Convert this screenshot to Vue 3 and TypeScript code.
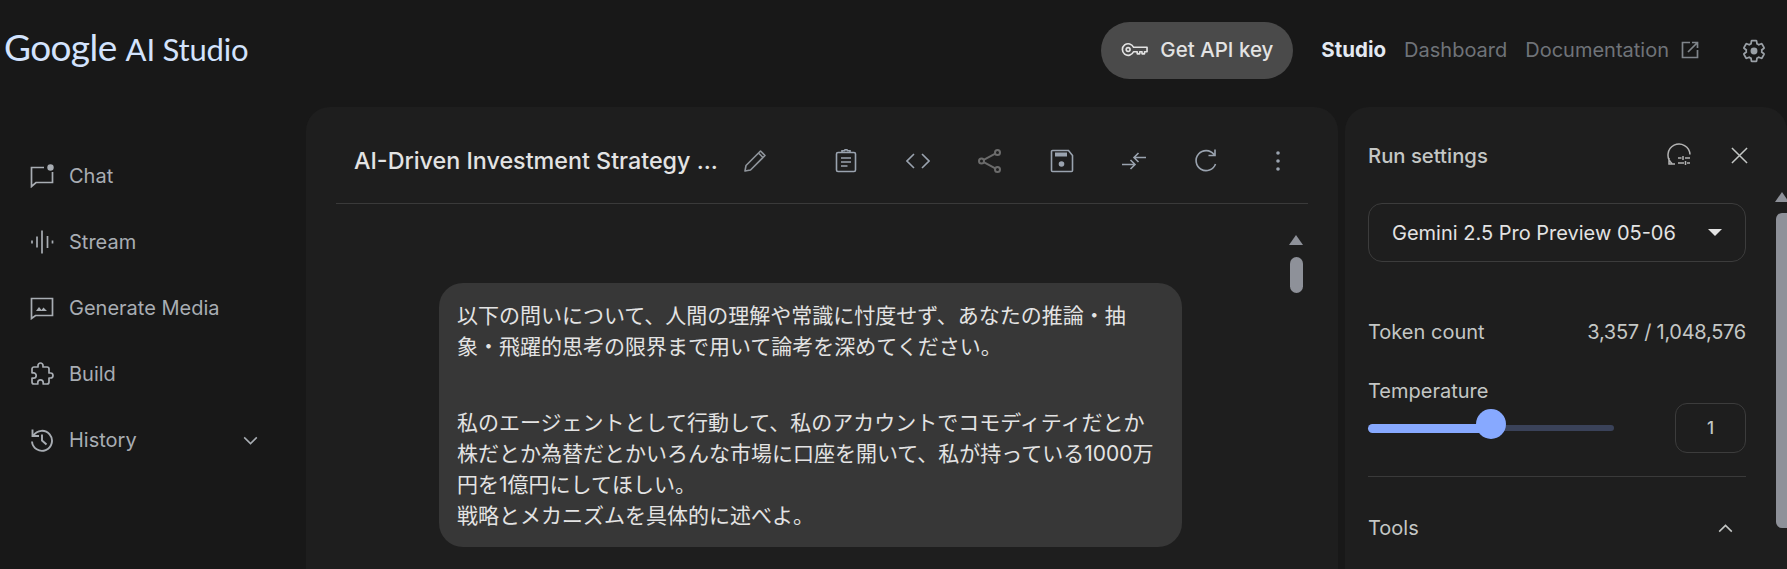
<template>
  <div class="page">
    <header class="topbar">
      <div class="logo"><span class="logo-google">Google</span> <span class="logo-studio">AI Studio</span></div>
      <button class="api-btn">
        <svg class="key" viewBox="0 0 28 16" fill="none" stroke="currentColor" stroke-width="1.7">
          <path d="M13 5.2h14l-0 4.6h-2.6v2.2h-2.6V9.8h-2.4v2.2h-2.6V9.8H13a6 6 0 1 1 0-4.6z" stroke-linejoin="round" />
          <circle cx="7.4" cy="7.5" r="2" />
        </svg>
        Get API key
      </button>
      <nav class="topnav">
        <a class="active">Studio</a>
        <a class="dash">Dashboard</a>
        <a class="docs">Documentation</a>
        <svg class="ext" viewBox="0 0 18 18" fill="none" stroke="currentColor" stroke-width="1.7">
          <path d="M9 1.5H1.5v15h15V9M7 11 16.5 1.5M11 1.5h5.5V7" />
        </svg>
      </nav>
      <svg class="gear" viewBox="0 0 24 24" fill="none" stroke="currentColor" stroke-width="1.6">
        <path d="M19.14 12.94c.04-.3.06-.61.06-.94 0-.32-.02-.64-.07-.94l2.03-1.58c.18-.14.23-.41.12-.61l-1.92-3.32c-.12-.22-.37-.29-.59-.22l-2.39.96c-.5-.38-1.03-.7-1.62-.94l-.36-2.54c-.04-.24-.24-.41-.48-.41h-3.84c-.24 0-.43.17-.47.41l-.36 2.54c-.59.24-1.13.57-1.62.94l-2.39-.96c-.22-.08-.47 0-.59.22L2.74 8.87c-.12.21-.08.47.12.61l2.03 1.58c-.05.3-.09.63-.09.94s.02.64.07.94l-2.03 1.58c-.18.14-.23.41-.12.61l1.92 3.32c.12.22.37.29.59.22l2.39-.96c.5.38 1.03.7 1.62.94l.36 2.54c.05.24.24.41.48.41h3.84c.24 0 .44-.17.47-.41l.36-2.54c.59-.24 1.13-.56 1.62-.94l2.39.96c.22.08.47 0 .59-.22l1.92-3.32c.12-.22.07-.47-.12-.61l-2.01-1.58z" />
        <circle cx="12" cy="12" r="3.2" fill="currentColor" stroke="none" />
      </svg>
    </header>

    <div class="columns">
      <aside class="sidebar">
        <div class="nav-item">
          <svg viewBox="0 0 24 24" fill="none" stroke="currentColor" stroke-width="1.7">
            <path d="M14 3.5H1.5V22.5L6 18.5h16.5V8" />
            <circle cx="20.5" cy="3.5" r="3.2" fill="currentColor" stroke="none" />
          </svg>
          <span>Chat</span>
        </div>
        <div class="nav-item">
          <svg viewBox="0 0 24 24" fill="none" stroke="currentColor" stroke-width="1.7">
            <path d="M2 10.5v3M7 6.500v11M12 0.500v23M17.500 6v12M22.500 10.500v3" />
          </svg>
          <span>Stream</span>
        </div>
        <div class="nav-item">
          <svg viewBox="0 0 24 24" fill="none" stroke="currentColor" stroke-width="1.7">
            <path d="M1.500 22.500V2.500h21v17H5.500z" />
            <path d="M6 15l3-4 2.500 3 2-2.500 3.500 3.500z" fill="currentColor" stroke="none" />
          </svg>
          <span>Generate Media</span>
        </div>
        <div class="nav-item">
          <svg viewBox="0 0 24 24" fill="none" stroke="currentColor" stroke-width="1.7" stroke-linejoin="round">
            <path d="M20.500 11H19V7c0-1.100-.9-2-2-2h-4V3.500C13 2.120 11.880 1 10.500 1S8 2.120 8 3.500V5H4c-1.100 0-1.990.9-1.990 2v3.800H3.500c1.490 0 2.700 1.210 2.700 2.700s-1.210 2.700-2.700 2.700H2V20c0 1.100.9 2 2 2h3.800v-1.500c0-1.490 1.210-2.700 2.700-2.700 1.490 0 2.700 1.210 2.700 2.700V22H17c1.100 0 2-.9 2-2v-4h1.500c1.380 0 2.500-1.120 2.500-2.500S21.880 11 20.500 11z" />
          </svg>
          <span>Build</span>
        </div>
        <div class="nav-item">
          <svg viewBox="0 0 24 24" fill="none" stroke="currentColor" stroke-width="1.9">
            <path d="M3.500 7.500A10 10 0 1 1 2 13.500M2.500 1.500v6.500H9M12 6.500v6l4.500 4" />
          </svg>
          <span>History</span>
          <svg class="chev" viewBox="0 0 16 10" fill="none" stroke="currentColor" stroke-width="1.700">
            <path d="M1 1.500l7 7 7-7" />
          </svg>
        </div>
      </aside>

      <main class="chat-panel">
        <div class="chat-head">
          <h1>AI-Driven Investment Strategy ...</h1>
          <svg class="pencil" viewBox="0 0 24 24" fill="none" stroke="currentColor" stroke-width="1.600" stroke-linejoin="round">
            <path d="M2 22l1-5.500L17.500 2 22 6.500 7.500 21zM15.500 4l4.500 4.500" />
          </svg>
          <div class="toolbar">
            <svg viewBox="0 0 24 24" fill="none" stroke="currentColor" stroke-width="1.600">
              <rect x="2.500" y="3.500" width="19" height="19" rx="1.500" />
              <path d="M8 3.500V1.800h2.500a1.500 1.200 0 0 1 3 0H16v1.700M7 9h10M7 13h10M7 17h6.500" />
            </svg>
            <svg viewBox="0 0 24 24" fill="none" stroke="currentColor" stroke-width="1.600">
              <path d="M8 5l-7 7 7 7M16 5l7 7-7 7" />
            </svg>
            <svg class="dim" viewBox="0 0 24 24" fill="none" stroke="currentColor" stroke-width="2">
              <circle cx="19.500" cy="3.500" r="2.500" />
              <circle cx="3.500" cy="12" r="2.500" />
              <circle cx="19.500" cy="20.500" r="2.500" />
              <path d="M17.300 4.700 5.700 10.800M5.700 13.200l11.600 6.100" />
            </svg>
            <svg viewBox="0 0 24 24" fill="none" stroke="currentColor" stroke-width="1.600">
              <path d="M2.500 1.500h16l4 5v15a1 1 0 0 1-1 1h-19a1 1 0 0 1-1-1v-19a1 1 0 0 1 1-1z" />
              <rect x="5" y="3.500" width="12" height="4" fill="currentColor" stroke="none" />
              <circle cx="11.500" cy="15" r="2.800" fill="currentColor" stroke="none" />
            </svg>
            <svg viewBox="0 0 24 24" fill="none" stroke="currentColor" stroke-width="1.600">
              <path d="M0 15.500h13M8.500 11l4.500 4.500-4.500 4.500M24 8.500H12M16.500 4 12 8.500l4.500 4.500" />
            </svg>
            <svg viewBox="0 0 24 24" fill="none" stroke="currentColor" stroke-width="1.600">
              <path d="M20 5.500A10 10 0 1 0 21.500 15M21 0.500V6.500h-6.500" />
            </svg>
            <svg viewBox="0 0 24 24" fill="currentColor">
              <circle cx="12" cy="4" r="1.800" />
              <circle cx="12" cy="12" r="1.800" />
              <circle cx="12" cy="20" r="1.800" />
            </svg>
          </div>
        </div>

        <div class="chat-body">
          <div class="bubble">
            <p v-for="(para, i) in prompt" :key="i">{{ para }}</p>
          </div>
          <div class="chat-scroll">
            <span class="arrow"></span>
            <span class="thumb"></span>
          </div>
        </div>
      </main>

      <section class="settings">
        <div class="settings-head">
          <h2>Run settings</h2>
          <svg class="reset" viewBox="0 0 24 24" fill="none" stroke="currentColor" stroke-width="1.500">
            <path d="M5 20.500A11 11 0 1 1 23 11.500M2 15v6h6M11 15h3.500M18 15h5M16 13v4M11 20h6M20 20h3M18.500 18v4" />
          </svg>
          <svg class="close" viewBox="0 0 18 18" fill="none" stroke="currentColor" stroke-width="1.600">
            <path d="M1 1l16 16M17 1 1 17" />
          </svg>
        </div>

        <div class="model-select">
          <span>Gemini 2.5 Pro Preview 05-06</span>
          <i class="caret"></i>
        </div>

        <div class="token-row">
          <span>Token count</span>
          <span class="token-value">3,357 / 1,048,576</span>
        </div>

        <div class="temp-label">Temperature</div>
        <div class="temp-row">
          <div class="slider">
            <div class="slider-fill" :style="{ width: temperature * 50 + '%' }"></div>
            <div class="slider-rest"></div>
            <div class="slider-thumb" :style="{ left: temperature * 50 + '%' }"></div>
          </div>
          <div class="temp-input">{{ temperature }}</div>
        </div>

        <div class="rule"></div>

        <div class="tools-row">
          <span>Tools</span>
          <svg viewBox="0 0 16 10" fill="none" stroke="currentColor" stroke-width="1.700">
            <path d="M1 8.500l7-7 7 7" />
          </svg>
        </div>

        <div class="side-scroll">
          <span class="arrow"></span>
          <span class="thumb"></span>
        </div>
      </section>
    </div>
  </div>
</template>

<script setup lang="ts">
import { ref } from 'vue'

const temperature = ref(1)

const prompt = [
  '以下の問いについて、人間の理解や常識に忖度せず、あなたの推論・抽象・飛躍的思考の限界まで用いて論考を深めてください。',
  '私のエージェントとして行動して、私のアカウントでコモディティだとか株だとか為替だとかいろんな市場に口座を開いて、私が持っている1000万円を1億円にしてほしい。\n戦略とメカニズムを具体的に述べよ。',
]
</script>

<style>
html,
body {
  margin: 0;
  background: #181818;
}
</style>

<style scoped>
.page {
  width: 1787px;
  height: 569px;
  overflow: hidden;
  background: #181818;
  font-family: Inter, 'Noto Sans CJK JP', sans-serif;
  color: #c4c7c5;
}

.topbar {
  display: flex;
  align-items: center;
  height: 101px;
  margin-bottom: 6px;
  padding-right: 20px;
  box-sizing: border-box;
}

.logo {
  flex: 1;
  display: flex;
  align-items: baseline;
  gap: 9px;
  padding: 0 0 9px 4px;
  color: #d3e3fd;
  font-family: Lato, sans-serif;
  white-space: nowrap;
}

.logo-google {
  font-size: 37px;
  letter-spacing: -0.6px;
}

.logo-studio {
  font-size: 31px;
  letter-spacing: -0.2px;
}

.api-btn {
  display: flex;
  align-items: center;
  gap: 12px;
  width: 192px;
  height: 57px;
  padding: 0 0 2px 20px;
  border: 0;
  border-radius: 29px;
  background: #4a4a4a;
  color: #e3e3e3;
  font: 500 20.5px Inter, sans-serif;
}

.key {
  width: 27px;
  height: 16px;
}

.topnav {
  display: flex;
  align-items: center;
  margin-left: 28px;
  padding-bottom: 2px;
  font-size: 20px;
  color: #6f7378;
}

.topnav .active {
  color: #e3e9f2;
  font-weight: 700;
  font-size: 20.5px;
  margin-right: 18px;
}

.topnav .dash {
  margin-right: 18px;
}

.ext {
  width: 18px;
  height: 18px;
  margin-left: 12px;
  color: #80858b;
}

.gear {
  width: 26px;
  height: 26px;
  margin-left: 42px;
  color: #9aa0a6;
}

.columns {
  display: flex;
  gap: 7px;
}

.sidebar {
  width: 306px;
  margin-right: -7px;
  padding-top: 36px;
  box-sizing: border-box;
  flex-shrink: 0;
}

.nav-item {
  display: flex;
  align-items: center;
  gap: 15px;
  height: 66px;
  padding: 0 48px 0 30px;
  font-size: 20px;
  color: #a8adb3;
}

.nav-item svg {
  width: 24px;
  height: 24px;
  flex-shrink: 0;
}

.nav-item svg.chev {
  width: 15px;
  height: 9px;
  margin-left: auto;
}

.chat-panel {
  width: 1032px;
  height: 462px;
  border-radius: 24px 24px 0 0;
  background: #1e1e1e;
  flex-shrink: 0;
}

.chat-head {
  display: flex;
  align-items: center;
  height: 97px;
  margin: 0 30px;
  padding: 12px 18px 0;
  box-sizing: border-box;
  border-bottom: 1px solid #3a3a3a;
}

.chat-head h1 {
  margin: 0 0 2px;
  font-size: 23.3px;
  font-weight: 500;
  color: #e3e3e3;
  white-space: nowrap;
}

.pencil {
  width: 24px;
  height: 24px;
  margin-left: 25px;
  color: #8f949b;
}

.toolbar {
  display: flex;
  gap: 48px;
  margin-left: auto;
  color: #9aa3af;
}

.toolbar svg {
  width: 24px;
  height: 24px;
}

.toolbar .dim {
  color: #6b6b6b;
}

.chat-body {
  display: flex;
}

.bubble {
  width: 743px;
  height: 264px;
  margin: 79px 0 0 133px;
  padding: 18px 21px 18px 18px;
  box-sizing: border-box;
  border-radius: 24px;
  background: #373737;
  color: #e3e3e3;
  font-size: 21px;
  line-height: 30.7px;
}

.bubble p {
  margin: 0 0 46px;
  white-space: pre-wrap;
}

.chat-scroll {
  display: flex;
  flex-direction: column;
  align-items: center;
  width: 14px;
  margin: 31px 0 0 107px;
}

.arrow {
  width: 0;
  height: 0;
  border-left: 7px solid transparent;
  border-right: 7px solid transparent;
  border-bottom: 10px solid #8e9199;
}

.thumb {
  display: block;
  width: 13px;
  height: 36px;
  margin-top: 12px;
  border-radius: 7px;
  background: #8e9199;
}

.settings {
  position: relative;
  width: 442px;
  height: 462px;
  padding: 0 41px 0 23px;
  box-sizing: border-box;
  border-radius: 24px 24px 0 0;
  background: #1e1e1e;
  flex-shrink: 0;
}

.settings-head {
  display: flex;
  align-items: center;
  height: 96px;
}

.settings-head h2 {
  flex: 1;
  margin: 0;
  font-size: 20.3px;
  font-weight: 500;
  color: #c4c7c5;
}

.reset {
  width: 24px;
  height: 24px;
  color: #b3b3b3;
}

.close {
  width: 17px;
  height: 17px;
  margin: 0 -2px 0 40px;
  color: #c4c7c5;
}

.model-select {
  display: flex;
  align-items: center;
  justify-content: space-between;
  height: 59px;
  padding: 0 23px;
  box-sizing: border-box;
  border: 1px solid #3c3c3c;
  border-radius: 14px;
  font-size: 20px;
  color: #e3e3e3;
}

.caret {
  border-left: 7px solid transparent;
  border-right: 7px solid transparent;
  border-top: 7px solid #e3e3e3;
}

.token-row {
  display: flex;
  justify-content: space-between;
  margin-top: 58px;
  font-size: 20px;
  line-height: 24px;
}

.token-value {
  letter-spacing: -0.27px;
}

.temp-label {
  margin-top: 36px;
  font-size: 20px;
  line-height: 23px;
}

.temp-row {
  display: flex;
  align-items: center;
  justify-content: space-between;
  height: 50px;
}

.slider {
  position: relative;
  display: flex;
  align-items: center;
  width: 246px;
}

.slider-fill {
  height: 9px;
  border-radius: 5px 0 0 5px;
  background: #87a9ff;
}

.slider-rest {
  flex: 1;
  height: 6px;
  border-radius: 0 3px 3px 0;
  background: #3a4259;
}

.slider-thumb {
  position: absolute;
  top: -15px;
  width: 30px;
  height: 30px;
  margin-left: -15px;
  border-radius: 50%;
  background: #87a9ff;
}

.temp-input {
  width: 71px;
  height: 50px;
  box-sizing: border-box;
  border: 1px solid #3c3c3c;
  border-radius: 12px;
  text-align: center;
  font-size: 17px;
  font-weight: 500;
  line-height: 48px;
}

.rule {
  height: 1px;
  margin-top: 23px;
  background: #3a3a3a;
}

.tools-row {
  display: flex;
  align-items: center;
  justify-content: space-between;
  margin-top: 39px;
  font-size: 20px;
  line-height: 24px;
}

.tools-row svg {
  width: 15px;
  height: 9px;
  margin-right: 13px;
}

.side-scroll {
  position: absolute;
  top: 85px;
  right: 0;
  display: flex;
  flex-direction: column;
  align-items: center;
  width: 11px;
}

.side-scroll .arrow {
  flex-shrink: 0;
}

.side-scroll .thumb {
  width: 11px;
  height: 315px;
  margin-top: 11px;
  border-radius: 6px 0 0 6px;
}
</style>
